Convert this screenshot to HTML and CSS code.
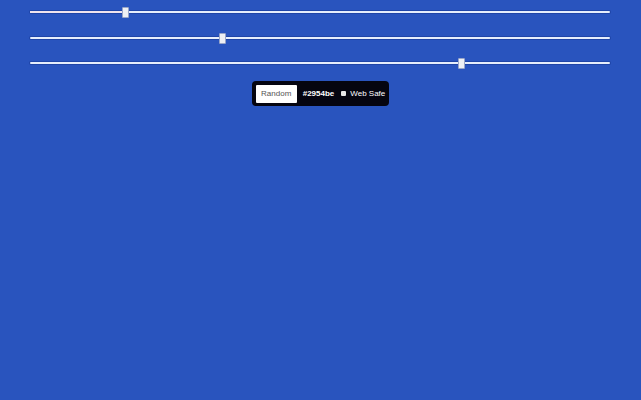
FILE: index.html
```html
<!DOCTYPE html>
<html>
<head>
<meta charset="utf-8">
<link rel="stylesheet" href="styles.css">
</head>
<body>
<div class="page">
  <div class="sliders">
    <div class="slider"><div class="track red"><div class="fill" style="width:16.4%"></div><div class="thumb" style="left:16.4%"></div></div></div>
    <div class="slider"><div class="track"><div class="thumb" style="left:33.1%"></div></div></div>
    <div class="slider"><div class="track"><div class="thumb" style="left:74.3%"></div></div></div>
  </div>
  <div class="bar-wrap">
    <div class="toolbar">
      <button class="btn">Random</button>
      <span class="hex">#2954be</span>
      <label class="safe"><span class="box"></span>Web Safe</label>
    </div>
  </div>
</div>
</body>
</html>
```
FILE: styles.css
```css
html, body {
  margin: 0;
  padding: 0;
  background: #2954be;
  height: 100%;
  font-family: "Liberation Sans", Arial, sans-serif;
}
.page {
  padding: 0 31px 0 30px;
}
.sliders {
  display: flex;
  flex-direction: column;
  padding-top: 6px;
}
.slider {
  display: flex;
  align-items: flex-start;
  padding-top: 5px;
  box-sizing: border-box;
  height: 25.5px;
}
.slider:last-child { height: 18px; }
.track {
  position: relative;
  width: 100%;
  height: 2px;
  background: #e6eefc;
  box-shadow: 0 0 0 1px rgba(20, 50, 140, 0.45);
  border-radius: 1px;
}
.fill {
  position: absolute;
  left: 0;
  top: 0;
  height: 2px;
  background: #f0e4ee;
}
.thumb {
  position: absolute;
  top: -4px;
  width: 5px;
  height: 9px;
  margin-left: -3px;
  background: #eef0f4;
  border: 1px solid #9aa6c8;
  border-radius: 1px;
}
.bar-wrap {
  display: flex;
  justify-content: center;
  padding-top: 6px;
  padding-left: 1px;
}
.toolbar {
  display: flex;
  align-items: center;
  background: #050510;
  border-radius: 4px;
  height: 25px;
  padding: 0 4px 0 4px;
  box-sizing: border-box;
}
.btn {
  background: #ffffff;
  border: none;
  border-radius: 1px;
  font-family: "Liberation Sans", Arial, sans-serif;
  font-size: 8px;
  color: #555;
  width: 41px;
  height: 18px;
  padding: 0;
  margin: 0;
}
.hex {
  color: #ffffff;
  font-weight: bold;
  font-size: 8px;
  margin-left: 6px;
}
.safe {
  display: flex;
  align-items: center;
  color: #ffffff;
  font-size: 8px;
  margin-left: 7px;
}
.box {
  width: 5px;
  height: 5px;
  background: #e8e8e8;
  border-radius: 1px;
  margin-right: 4px;
}
```
